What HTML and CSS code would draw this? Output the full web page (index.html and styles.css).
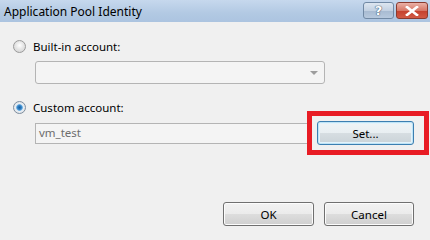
FILE: index.html
```html
<!DOCTYPE html>
<html>
<head>
<meta charset="utf-8">
<link rel="stylesheet" href="styles.css">
</head>
<body>
<div class="window">
  <div class="titlebar">
    <span class="title">Application Pool Identity</span>
    <div class="tb-buttons">
      <div class="tb-btn help">?</div>
      <div class="tb-btn close">
        <svg width="14" height="10" viewBox="0 0 14 10"><path d="M2 1 L12 9 M12 1 L2 9" stroke="#fff" stroke-width="2.6" stroke-linecap="square"/></svg>
      </div>
    </div>
  </div>
  <div class="content">
    <div class="radio-row first">
      <span class="radio"></span>
      <span class="label">Built-in account:</span>
    </div>
    <div class="combo"><span class="arrow"></span></div>
    <div class="radio-row second">
      <span class="radio checked"></span>
      <span class="label">Custom account:</span>
    </div>
    <div class="account-row">
      <div class="textbox">vm_test</div>
      <div class="btn set">Set...</div>
      <div class="highlight"></div>
    </div>
    <div class="footer">
      <div class="btn ok">OK</div>
      <div class="btn cancel">Cancel</div>
    </div>
  </div>
</div>
</body>
</html>
```
FILE: styles.css
```css
* { box-sizing: border-box; }
html, body { margin: 0; padding: 0; }
body {
  width: 430px;
  height: 240px;
  overflow: hidden;
  background: #f0f0f0;
  font-family: "Noto Sans", "Open Sans", sans-serif;
  font-size: 11.5px;
  color: #000;
}
.window { width: 430px; height: 240px; display: flex; flex-direction: column; }
.titlebar {
  height: 22px;
  flex: none;
  background: linear-gradient(#c6d8ed, #b2c9e3 60%, #acc4e0);
  display: flex;
  align-items: center;
  justify-content: space-between;
  padding: 0 2px 0 4px;
}
.title { font-size: 12px; color: #000; }
.tb-buttons { display: flex; gap: 2px; align-self: flex-start; margin-top: 2px; }
.tb-btn {
  height: 17px;
  border-radius: 3px;
  display: flex;
  align-items: center;
  justify-content: center;
}
.help {
  width: 31px;
  border: 1px solid #7189a4;
  background: linear-gradient(#dde6f0, #c3d1e2 50%, #a7bad1 51%, #b7c9de);
  color: #fff;
  font-family: "DejaVu Sans", sans-serif;
  font-weight: bold;
  font-size: 13px;
  text-shadow: 0 0 1px #4a607a, 0 0 1px #4a607a, 0 0 1px #4a607a;
}
.close {
  width: 32px;
  border: 1px solid #8a3b2f;
  background: linear-gradient(#eab1a6, #d77766 50%, #c4402c 51%, #d25a44);
}
.content { flex: 1; position: relative; padding: 0 0 0 13px; }
.radio-row { display: flex; align-items: center; height: 16px; }
.radio-row.first { margin-top: 16px; }
.radio-row.second { margin-top: 15px; }
.radio {
  width: 13px; height: 13px;
  border-radius: 50%;
  border: 1px solid #9a9a9a;
  background: radial-gradient(circle at 50% 40%, #ffffff 0, #e6e6e6 45%, #cfcfcf 100%);
  display: inline-block;
}
.radio.checked {
  border-color: #7d8d9e;
  background: radial-gradient(circle at 50% 50%, #1b5f9e 0, #2f7fc4 25%, #6fb0e2 38%, #e8eef4 48%, #dcdcdc 100%);
}
.label { margin-left: 7px; }
.combo {
  margin: 7px 0 0 22px;
  width: 290px;
  height: 23px;
  border: 1px solid #b4b4b4;
  border-radius: 3px;
  background: #f4f4f4;
  display: flex;
  align-items: center;
  justify-content: flex-end;
  padding-right: 6px;
}
.arrow {
  width: 0; height: 0;
  border-left: 4px solid transparent;
  border-right: 4px solid transparent;
  border-top: 4px solid #9d9d9d;
}
.account-row {
  margin-top: 6px;
  display: flex;
  align-items: center;
  position: relative;
  height: 24px;
}
.textbox {
  margin-left: 22px;
  width: 275px;
  height: 21px;
  border: 1px solid #b4b4b4;
  background: #f4f4f4;
  color: #6d6d6d;
  padding-left: 3px;
  line-height: 18px;
}
.btn {
  height: 24px;
  border: 1px solid #707070;
  border-radius: 3px;
  background: linear-gradient(#f2f2f2, #ebebeb 50%, #dddddd 51%, #cfcfcf);
  display: flex;
  align-items: center;
  justify-content: center;
  box-shadow: inset 0 0 0 1px #fcfcfc;
}
.set {
  margin-left: 7px;
  width: 97px;
  border-color: #3c7fb1;
  box-shadow: inset 0 0 0 1px #bfe3f5, inset 0 0 0 2px #e3f3fb;
  background: linear-gradient(#f0f4f6, #e8eef1 50%, #d6dde1 51%, #cad3d8);
}
.highlight {
  position: absolute;
  left: 294px;
  right: 1px;
  top: -10px;
  bottom: -10px;
  border: 5px solid #e81c24;
}
.footer {
  display: flex;
  gap: 10px;
  margin: 57px 0 0 210px;
}
.ok { width: 91px; }
.cancel { width: 90px; }
```
